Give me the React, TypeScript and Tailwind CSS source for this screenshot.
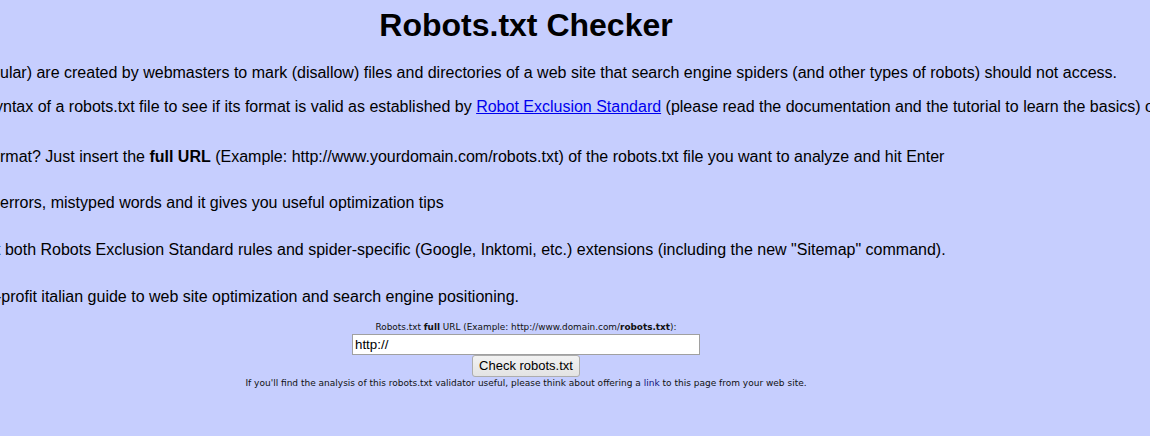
export default function App() {
  const para = "h-[18px] whitespace-nowrap text-[16px] leading-[18px] text-black";

  return (
    <div className="h-[436px] w-full overflow-hidden bg-[#c6cefe] font-['Liberation_Sans',Arial,sans-serif]">
      <div className="flex w-[1052px] flex-col">
        {/* Title */}
        <h1 className="mt-[7px] text-center text-[32px] font-bold leading-[37px] text-black">
          Robots.txt Checker
        </h1>

        {/* Intro text (left edge is cut by the viewport) */}
        <p className={`mt-[20px] ${para}`}>
          ular) are created by webmasters to mark (disallow) files and directories of a web site that
          search engine spiders (and other types of robots) should not access.
        </p>
        <p className={`mt-[16px] -ml-[5px] ${para}`}>
          yntax of a robots.txt file to see if its format is valid as established by{" "}
          <a href="#" className="text-[#0000ee] underline">
            Robot Exclusion Standard
          </a>{" "}
          (please read the documentation and the tutorial to learn the basics) or if it contains errors.
        </p>
        <p className={`mt-[32px] ${para}`}>
          rmat? Just insert the <b>full URL</b> (Example: http://www.yourdomain.com/robots.txt) of the
          robots.txt file you want to analyze and hit Enter
        </p>
        <p className={`mt-[28px] ${para}`}>errors, mistyped words and it gives you useful optimization tips</p>
        <p className={`mt-[29px] -ml-[4px] ${para}`}>
          t both Robots Exclusion Standard rules and spider-specific (Google, Inktomi, etc.) extensions
          (including the new "Sitemap" command).
        </p>
        <p className={`mt-[29px] -ml-[4px] ${para}`}>
          -profit italian guide to web site optimization and search engine positioning.
        </p>

        {/* Form */}
        <form className="mt-[15px] flex flex-col items-center" onSubmit={(e) => e.preventDefault()}>
          <label className="h-[13px] font-['DejaVu_Sans',Verdana,sans-serif] text-[8.9px] leading-[13px] text-[#111]">
            Robots.txt <b>full</b> URL (Example: http://www.domain.com/<b>robots.txt</b>):
          </label>
          <input
            type="text"
            defaultValue="http://"
            className="h-[21px] w-[348px] border border-[#a0a0a0] bg-white px-[2px] text-[13.33px] leading-[19px] text-black outline-none"
          />
          <button
            type="submit"
            className="h-[22px] w-[108px] rounded-[3px] border border-[#adadad] bg-gradient-to-b from-[#f2f2f2] to-[#e3e3e3] text-[13px] leading-[20px] text-black"
          >
            Check robots.txt
          </button>
          <p className="h-[12px] font-['DejaVu_Sans',Verdana,sans-serif] text-[9px] leading-[12px] text-[#111]">
            If you'll find the analysis of this robots.txt validator useful, please think about offering a{" "}
            <a href="#" className="text-[#10107a]">
              link
            </a>{" "}
            to this page from your web site.
          </p>
        </form>
      </div>
    </div>
  );
}
